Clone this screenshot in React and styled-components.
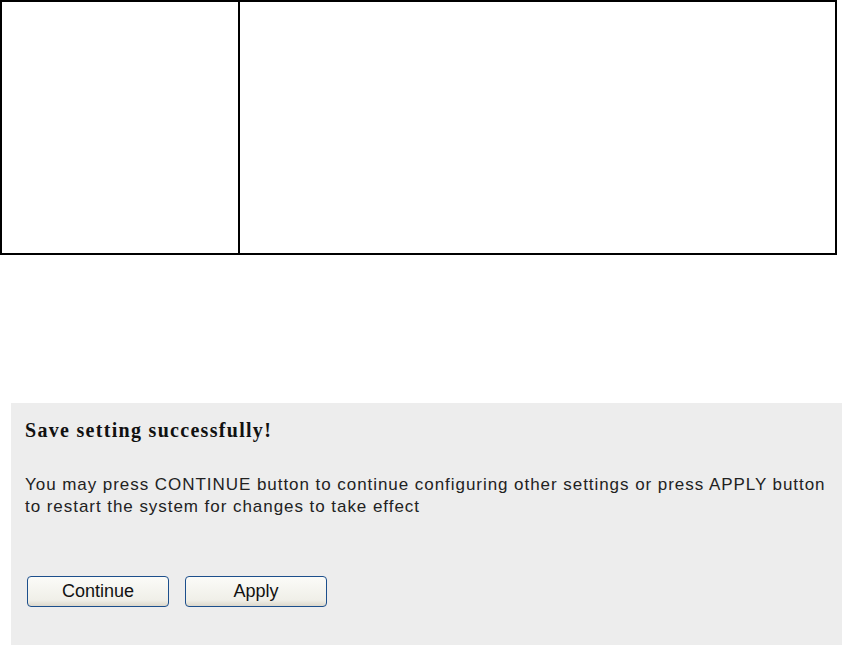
import React from "react";
import styled, { createGlobalStyle } from "styled-components";

const Global = createGlobalStyle`
  html, body { margin: 0; padding: 0; background: #fff; }
  body { width: 842px; height: 645px; overflow: hidden; }
`;

const Page = styled.div`
  display: flex;
  flex-direction: column;
  width: 842px;
  height: 645px;
`;

const Frame = styled.div`
  display: grid;
  grid-template-columns: 236px 1fr;
  width: 837px;
  height: 255px;
  box-sizing: border-box;
  border: 2px solid #000;
`;

const Cell = styled.div`
  border-left: ${(p) => (p.$divider ? "2px solid #000" : "none")};
`;

const Panel = styled.div`
  margin: 148px 0 0 11px;
  flex: 1;
  background: #ededed;
  padding: 14px 0 0 14px;
  display: flex;
  flex-direction: column;
`;

const Title = styled.div`
  font-family: "Liberation Serif", "Times New Roman", serif;
  font-weight: bold;
  font-size: 20px;
  letter-spacing: 1.3px;
  color: #111;
  line-height: 26px;
`;

const Message = styled.p`
  margin: 31px 0 0;
  font-family: "Liberation Sans", Arial, sans-serif;
  font-size: 17px;
  letter-spacing: 0.95px;
  line-height: 22px;
  color: #222;
`;

const Buttons = styled.div`
  display: flex;
  gap: 16px;
  margin: 58px 0 0 2px;
`;

const Button = styled.button`
  width: 142px;
  height: 31px;
  box-sizing: border-box;
  border: 1.5px solid #1c4f8c;
  border-radius: 4px;
  background: linear-gradient(#fbfbf8, #f0efe8 80%, #dcd8cc);
  font-family: "Liberation Sans", Arial, sans-serif;
  font-size: 18px;
  color: #111;
  padding: 0;
  cursor: pointer;
`;

export default function App() {
  return (
    <>
      <Global />
      <Page>
        <Frame>
          <Cell />
          <Cell $divider />
        </Frame>
        <Panel>
          <Title>Save setting successfully!</Title>
          <Message>
            You may press CONTINUE button to continue configuring other settings or press APPLY button
            <br />
            to restart the system for changes to take effect
          </Message>
          <Buttons>
            <Button>Continue</Button>
            <Button>Apply</Button>
          </Buttons>
        </Panel>
      </Page>
    </>
  );
}
